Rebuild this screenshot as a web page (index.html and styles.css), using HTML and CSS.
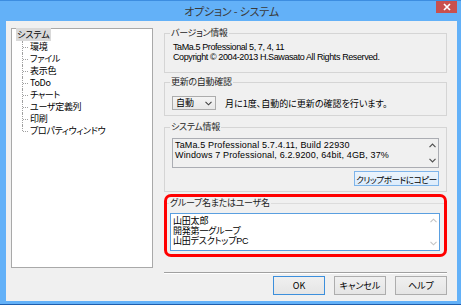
FILE: index.html
```html
<!DOCTYPE html>
<html lang="ja">
  <head>
    <meta charset="utf-8" />
    <title>オプション - システム</title>
    <link rel="stylesheet" href="styles.css">
  </head>
  <body>
    <div class="window">
      <div class="titlebar">
        <span class="title">オプション - システム</span>
        <span class="close">
          <svg width="8" height="8" viewBox="0 0 8 8"><path d="M1 1L7 7M7 1L1 7" stroke="#fff" stroke-width="1.7" /></svg>
        </span>
      </div>
      <div class="client">
        <!-- left tree of option pages -->
        <div class="tree">
          <div class="tree-root"><span class="selected">システム</span></div>
          <ul class="tree-children">
            <li>環境</li>
            <li>ファイル</li>
            <li>表示色</li>
            <li>ToDo</li>
            <li>チャート</li>
            <li>ユーザ定義列</li>
            <li>印刷</li>
            <li>プロパティウィンドウ</li>
          </ul>
        </div>

        <div class="main">
          <fieldset class="group group-version">
            <legend>バージョン情報</legend>
            <div class="lines">TaMa.5 Professional 5, 7, 4, 11<br>Copyright © 2004-2013 H.Sawasato All Rights Reserved.</div>
          </fieldset>

          <fieldset class="group group-update">
            <legend>更新の自動確認</legend>
            <div class="update-row">
              <div class="combo">
                <span>自動</span>
                <svg width="7" height="5" viewBox="0 0 7 5"><path d="M0.5 0.8L3.5 3.8L6.5 0.8" fill="none" stroke="#404040" stroke-width="1.1" /></svg>
              </div>
              <span>月に1度、自動的に更新の確認を行います。</span>
            </div>
          </fieldset>

          <fieldset class="group group-sys">
            <legend>システム情報</legend>
            <div class="textbox readonly sys-box">
              <div class="textbox-text">TaMa.5 Professional 5.7.4.11, Build 22930<br>Windows 7 Professional, 6.2.9200, 64bit, 4GB, 37%</div>
              <div class="vscroll">
                <svg width="7" height="5" viewBox="0 0 7 5"><path d="M0.5 4.2L3.5 1.2L6.5 4.2" fill="none" stroke="#505050" stroke-width="1.2" /></svg>
                <svg width="7" height="5" viewBox="0 0 7 5"><path d="M0.5 0.8L3.5 3.8L6.5 0.8" fill="none" stroke="#505050" stroke-width="1.2" /></svg>
              </div>
            </div>
            <div class="copy-row">
              <button class="btn btn-hover">クリップボードにコピー</button>
            </div>
          </fieldset>

          <!-- red marker drawn round the user group box -->
          <div class="highlight">
            <fieldset class="group group-user">
              <legend>グループ名またはユーザ名</legend>
              <div class="textbox focused user-box">
                <div class="textbox-text">山田太郎<br>開発第一グループ<br>山田デスクトップPC</div>
                <div class="vscroll disabled">
                  <svg width="7" height="5" viewBox="0 0 7 5"><path d="M0.5 4.2L3.5 1.2L6.5 4.2" fill="none" stroke="#c4c4c4" stroke-width="1.1" /></svg>
                  <svg width="7" height="5" viewBox="0 0 7 5"><path d="M0.5 0.8L3.5 3.8L6.5 0.8" fill="none" stroke="#c4c4c4" stroke-width="1.1" /></svg>
                </div>
              </div>
            </fieldset>
          </div>

          <div class="separator"></div>

          <div class="dialog-buttons">
            <button class="btn btn-default">OK</button>
            <button class="btn">キャンセル</button>
            <button class="btn">ヘルプ</button>
          </div>
        </div>
      </div>
    </div>
  </body>
</html>
```

FILE: styles.css
```css
body {
  margin: 0;
  font-family: "Noto Sans CJK JP", sans-serif;
  font-size: 9px;
  font-feature-settings: "palt";
  color: #000;
}

.window {
  width: 461px;
  height: 305px;
  box-sizing: border-box;
  display: flex;
  flex-direction: column;
  background: #63b1f8;
  border-top: 1px solid #3d8de0;
  border-bottom: 1px solid #1f5fae;
  padding: 0 4px 3px 6px;
}

.titlebar {
  position: relative;
  height: 20px;
  display: flex;
  align-items: center;
  justify-content: center;
}

.title {
  font-size: 11px;
  color: #3a3a3a;
  line-height: 12px;
  letter-spacing: -0.2px;
}

.close {
  position: absolute;
  right: 0;
  top: 0;
  width: 21px;
  height: 12px;
  background: #c9504e;
  display: flex;
  align-items: center;
  justify-content: center;
}

.client {
  flex: 1;
  display: flex;
  background: #f0f0f0;
  padding: 0 10px 0 5px;
}

/* tree */
.tree {
  width: 142px;
  height: 240px;
  box-sizing: border-box;
  margin-top: 7px;
  background: #fff;
  border: 1px solid #a9a9a9;
  padding: 0 0 0 4px;
  line-height: 12px;
}

.tree-root .selected {
  background: #d9d9d9;
  padding: 0 1px;
}

.tree-children {
  list-style: none;
  margin: 0;
  padding: 0 0 0 14px;
  letter-spacing: -0.3px;
}

.tree-children li {
  position: relative;
  height: 12px;
}

.tree-children li::before {
  content: "";
  position: absolute;
  left: -8px;
  top: 0;
  height: 12px;
  border-left: 1px dotted #a0a0a0;
}

.tree-children li:last-child::before {
  height: 6px;
}

.tree-children li::after {
  content: "";
  position: absolute;
  left: -7px;
  top: 6px;
  width: 5px;
  border-top: 1px dotted #a0a0a0;
}

/* right column */
.main {
  width: 283px;
  margin-left: 11px;
  padding-top: 6px;
  display: flex;
  flex-direction: column;
}

.group {
  margin: 0;
  min-width: 0;
  border: 1px solid #d5d5d5;
  padding: 0 7px;
}

.group legend {
  margin-left: -2px;
  padding: 0 1px;
  line-height: 12px;
  color: #1e1e1e;
  letter-spacing: -0.3px;
}

/* multi-line texts: latin face first, japanese falls back to Noto */
.lines,
.textbox-text {
  font-family: "Liberation Sans", "Noto Sans CJK JP", sans-serif;
  line-height: 10px;
}

.lines {
  padding-left: 1px;
  letter-spacing: -0.4px;
}

.group-version {
  padding-top: 3px;
  padding-bottom: 10px;
}

.group-update {
  margin-top: 3px;
  padding-top: 8px;
  padding-bottom: 5px;
}

.update-row {
  display: flex;
  align-items: center;
  gap: 9px;
}

.combo {
  width: 44px;
  height: 14px;
  box-sizing: border-box;
  border: 1px solid #acacac;
  background: linear-gradient(#f4f4f4, #e8e8e8);
  display: flex;
  align-items: center;
  justify-content: space-between;
  padding: 0 3px 0 3px;
  line-height: 12px;
}

.group-sys {
  margin-top: 5px;
  padding-top: 5px;
  padding-bottom: 5px;
}

.textbox {
  display: flex;
  box-sizing: border-box;
  border: 1px solid #abadb3;
}

.textbox-text {
  flex: 1;
  padding-left: 2px;
}

.readonly {
  background: #f0f0f0;
}

.focused {
  background: #fff;
  border-color: #5a9fe0;
}

.sys-box {
  height: 30px;
}

.sys-box .textbox-text {
  letter-spacing: 0.15px;
  padding-top: 1px;
}

.user-box {
  height: 38px;
}

.user-box .textbox-text {
  padding-top: 2px;
  letter-spacing: -0.2px;
}

.vscroll {
  width: 12px;
  display: flex;
  flex-direction: column;
  justify-content: space-between;
  align-items: center;
  padding: 4px 0 4px;
}

.copy-row {
  display: flex;
  justify-content: flex-end;
  margin-top: 3px;
}

.btn {
  font-family: inherit;
  font-size: 9px;
  font-feature-settings: "palt";
  color: #000;
  margin: 0;
  padding: 0;
  height: 19px;
  width: 52px;
  border: 1px solid #adadad;
  background: linear-gradient(#f0f0f0, #e5e5e5);
  line-height: 12px;
  white-space: nowrap;
}

.btn-hover {
  width: 85px;
  height: 15px;
  font-size: 8.5px;
  letter-spacing: -0.4px;
  background: linear-gradient(#ecf4fc, #dcecfc);
  border-color: #7eb4ea;
}

.btn-default {
  border-color: #3c8fdc;
}

.highlight {
  margin-top: 2px;
  height: 63px;
  box-sizing: border-box;
  border: 3px solid #f00;
  border-radius: 7px;
}

.group-user {
  border: 0;
  border-top: 1px solid #dcdcdc;
  padding: 4px 4px 3px 3px;
}

.group-user legend {
  margin-left: -1px;
}

.separator {
  margin-top: 15px;
  border-top: 1px solid #a0a0a0;
  border-bottom: 1px solid #fff;
}

.dialog-buttons {
  display: flex;
  justify-content: flex-end;
  gap: 9px;
  margin-top: 2px;
}
```
